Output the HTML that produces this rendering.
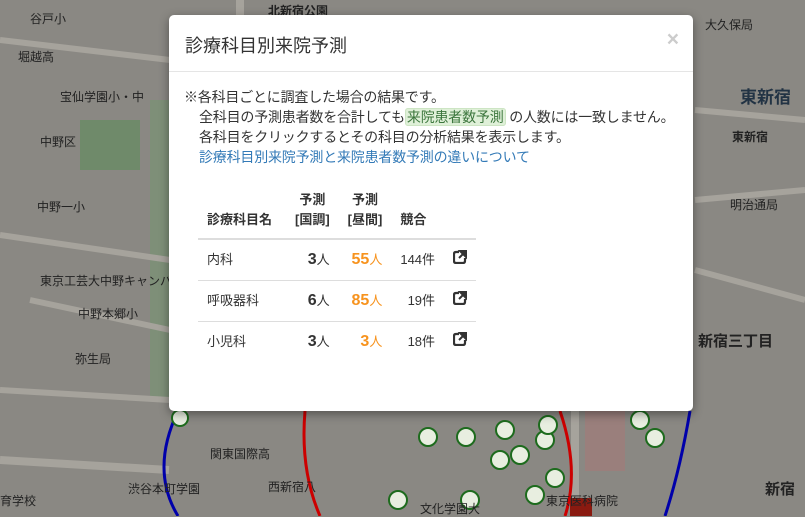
<!DOCTYPE html>
<html><head><meta charset="utf-8"><style>
body{margin:0;width:805px;height:516px;overflow:hidden;position:relative;background:#8a8883;font-family:"Liberation Sans","Noto Sans CJK JP",sans-serif;}
.map{position:absolute;inset:0}
.m{position:absolute;color:#222;font-size:12px}
.modal{position:absolute;left:169px;top:15px;width:524px;height:396px;background:#fff;border-radius:5px;box-shadow:0 3px 10px rgba(0,0,0,.4)}
.hd{height:56px;border-bottom:1px solid #e5e5e5;position:relative}
.hd h4{margin:0;position:absolute;left:16px;top:17px;font-size:18px;font-weight:normal;color:#333}
.x{position:absolute;right:14px;top:13px;font-size:21px;font-weight:bold;color:#ccc}
.bd{padding:15px 15px;font-size:14px;color:#333;line-height:20px;white-space:nowrap;letter-spacing:-0.2px}
.ind{padding-left:15px}
.hl{background:#dff0d8;color:#3c763d;border-radius:3px;padding:0 1px;border:1px solid #cde5c4}
a{color:#337ab7;text-decoration:none}
table{border-collapse:collapse;margin:23px 0 0 14px;font-size:13px;color:#333;letter-spacing:0}
th{font-weight:bold;vertical-align:bottom;padding:0 9px 8px;text-align:left;border-bottom:2px solid #ddd;line-height:20px}
td{padding:0 9px;height:40px;border-bottom:1px solid #ddd}
td.n{text-align:right}
b.v{font-size:16px}
.o{color:#f7931e;font-size:16px;font-weight:bold}
.os{color:#f7931e}
</style></head><body>
<div class="map">
<svg width="805" height="516" style="position:absolute;left:0;top:0">
<rect x="150" y="100" width="25" height="300" fill="#7e8f78"/>
<rect x="80" y="120" width="60" height="50" fill="#6f8a6a"/>
<path d="M0 40 L170 60 M0 235 L170 260 M30 300 L170 330 M0 390 L170 400 M695 110 L805 120 M695 270 L805 300 M695 200 L805 190" stroke="#a6a39c" stroke-width="6"/>
<path d="M240 0 V20 M575 411 V516 M0 460 L169 470" stroke="#a6a39c" stroke-width="8"/>
<path d="M178 411 Q150 470 178 516" stroke="#0000aa" stroke-width="3" fill="none"/>
<path d="M690 411 Q680 470 665 516" stroke="#0000aa" stroke-width="3" fill="none"/>
<path d="M305 411 Q300 470 320 516 M560 411 Q580 470 565 516" stroke="#cc0000" stroke-width="3" fill="none"/>
<rect x="585" y="411" width="40" height="60" fill="#9a7f7c"/>
<rect x="570" y="498" width="22" height="18" fill="#8a1a10"/>
<g fill="#e8eee0" stroke="#1d6b1d" stroke-width="2">
<circle cx="180" cy="418" r="8"/><circle cx="428" cy="437" r="9"/><circle cx="466" cy="437" r="9"/><circle cx="505" cy="430" r="9"/><circle cx="520" cy="455" r="9"/><circle cx="545" cy="440" r="9"/><circle cx="548" cy="425" r="9"/><circle cx="555" cy="478" r="9"/><circle cx="398" cy="500" r="9"/><circle cx="470" cy="500" r="9"/><circle cx="640" cy="420" r="9"/><circle cx="655" cy="438" r="9"/><circle cx="500" cy="460" r="9"/><circle cx="535" cy="495" r="9"/></g>
</svg>
<div class="m" style="left:30px;top:10px">谷戸小</div>
<div class="m" style="left:18px;top:48px">堀越高</div>
<div class="m" style="left:60px;top:88px">宝仙学園小・中</div>
<div class="m" style="left:40px;top:133px">中野区</div>
<div class="m" style="left:37px;top:198px">中野一小</div>
<div class="m" style="left:40px;top:272px">東京工芸大中野キャンパ</div>
<div class="m" style="left:78px;top:305px">中野本郷小</div>
<div class="m" style="left:75px;top:350px">弥生局</div>
<div class="m" style="left:0px;top:492px">育学校</div>
<div class="m" style="left:128px;top:480px">渋谷本町学園</div>
<div class="m" style="left:210px;top:445px">関東国際高</div>
<div class="m" style="left:268px;top:478px">西新宿八</div>
<div class="m" style="left:420px;top:500px">文化学園大</div>
<div class="m" style="left:546px;top:492px">東京医科病院</div>
<div class="m" style="left:268px;top:2px;font-weight:bold">北新宿公園</div>
<div class="m" style="left:705px;top:16px">大久保局</div>
<div class="m" style="left:740px;top:83px;font-size:17px;font-weight:bold;color:#234">東新宿</div>
<div class="m" style="left:732px;top:128px;font-weight:bold">東新宿</div>
<div class="m" style="left:730px;top:196px">明治通局</div>
<div class="m" style="left:698px;top:330px;font-size:15px;font-weight:bold">新宿三丁目</div>
<div class="m" style="left:765px;top:478px;font-size:15px;font-weight:bold">新宿</div>
</div>
<div class="modal">
<div class="hd"><h4>診療科目別来院予測</h4><span class="x">×</span></div>
<div class="bd">
<div>※各科目ごとに調査した場合の結果です。</div>
<div class="ind">全科目の予測患者数を合計しても<span class="hl">来院患者数予測</span> の人数には一致しません。</div>
<div class="ind">各科目をクリックするとその科目の分析結果を表示します。</div>
<div class="ind"><a>診療科目別来院予測と来院患者数予測の違いについて</a></div>
<table>
<tr><th style="width:70px">診療科目名</th><th style="text-align:center">予測<br>[国調]</th><th style="text-align:center">予測<br>[昼間]</th><th>競合</th><th style="width:14px"></th></tr>
<tr><td>内科</td><td class="n"><b class="v">3</b>人</td><td class="n"><span class="o">55</span><span class="os">人</span></td><td class="n">144件</td><td><svg width="14" height="14" viewBox="0 0 14 14"><path d="M6 2H3Q1 2 1 4V11Q1 13 3 13H10Q12 13 12 11V8" stroke="#333" stroke-width="2.2" fill="none"/><path d="M7 1H13V7Z M12 2L6 8" stroke="#333" stroke-width="2" fill="#333"/></svg></td></tr>
<tr><td>呼吸器科</td><td class="n"><b class="v">6</b>人</td><td class="n"><span class="o">85</span><span class="os">人</span></td><td class="n">19件</td><td><svg width="14" height="14" viewBox="0 0 14 14"><path d="M6 2H3Q1 2 1 4V11Q1 13 3 13H10Q12 13 12 11V8" stroke="#333" stroke-width="2.2" fill="none"/><path d="M7 1H13V7Z M12 2L6 8" stroke="#333" stroke-width="2" fill="#333"/></svg></td></tr>
<tr><td style="border:0">小児科</td><td class="n" style="border:0"><b class="v">3</b>人</td><td class="n" style="border:0"><span class="o">3</span><span class="os">人</span></td><td class="n" style="border:0">18件</td><td style="border:0"><svg width="14" height="14" viewBox="0 0 14 14"><path d="M6 2H3Q1 2 1 4V11Q1 13 3 13H10Q12 13 12 11V8" stroke="#333" stroke-width="2.2" fill="none"/><path d="M7 1H13V7Z M12 2L6 8" stroke="#333" stroke-width="2" fill="#333"/></svg></td></tr>
</table>
</div></div>
</body></html>
